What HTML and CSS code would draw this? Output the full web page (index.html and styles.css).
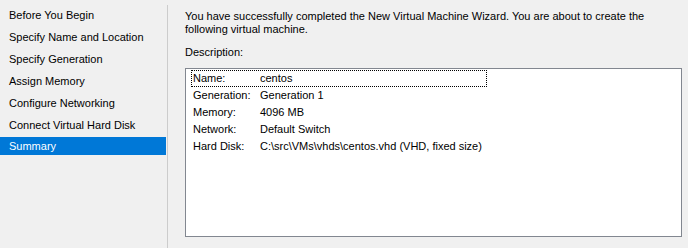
FILE: index.html
```html
<!DOCTYPE html>
<html>
<head>
<meta charset="utf-8">
<link rel="stylesheet" href="styles.css">
</head>
<body>
<div class="wizard">
  <nav class="steps">
    <div class="step">Before You Begin</div>
    <div class="step">Specify Name and Location</div>
    <div class="step">Specify Generation</div>
    <div class="step">Assign Memory</div>
    <div class="step">Configure Networking</div>
    <div class="step">Connect Virtual Hard Disk</div>
    <div class="step active">Summary</div>
  </nav>
  <div class="sep"></div>
  <main class="content">
    <p class="intro">You have successfully completed the New Virtual Machine Wizard. You are about to create the following virtual machine.</p>
    <div class="desc-label">Description:</div>
    <div class="listbox">
      <div class="row focus"><span class="k">Name:</span><span class="v">centos</span></div>
      <div class="row"><span class="k">Generation:</span><span class="v">Generation 1</span></div>
      <div class="row"><span class="k">Memory:</span><span class="v">4096 MB</span></div>
      <div class="row"><span class="k">Network:</span><span class="v">Default Switch</span></div>
      <div class="row"><span class="k">Hard Disk:</span><span class="v">C:\src\VMs\vhds\centos.vhd (VHD, fixed size)</span></div>
    </div>
  </main>
</div>
</body>
</html>
```
FILE: styles.css
```css
html, body {
  margin: 0;
  padding: 0;
  background: #f0f0f0;
}
body {
  font-family: "Liberation Sans", Arial, sans-serif;
  font-size: 11px;
  color: #000;
  width: 688px;
  height: 248px;
  overflow: hidden;
}
.wizard {
  display: flex;
  height: 248px;
}
.steps {
  width: 166px;
  padding-top: 4px;
  display: flex;
  flex-direction: column;
}
.step {
  height: 22px;
  line-height: 22px;
  padding-left: 9px;
  white-space: nowrap;
}
.step.active {
  background: #0078d7;
  color: #fff;
  height: 18px;
  line-height: 18px;
  margin-top: 1px;
}
.sep {
  width: 1px;
  margin-left: 1px;
  margin-top: 5px;
  background: #cccccc;
}
.content {
  flex: 1;
  padding: 10px 0 0 17px;
}
.intro {
  margin: 0;
  line-height: 13px;
  width: 480px;
}
.desc-label {
  margin-top: 10px;
  line-height: 13px;
}
.listbox {
  margin-top: 9px;
  width: 497px;
  height: 169px;
  border: 1px solid #828790;
  background: #fff;
  padding: 1px 0 0 5px;
  box-sizing: border-box;
}
.row {
  display: flex;
  height: 17px;
  line-height: 17px;
  white-space: nowrap;
  padding-left: 2px;
  width: 296px;
  box-sizing: border-box;
}
.row.focus {
  outline: 1px dotted #000;
  outline-offset: -1px;
}
.k {
  flex: none;
  width: 67px;
}
```
